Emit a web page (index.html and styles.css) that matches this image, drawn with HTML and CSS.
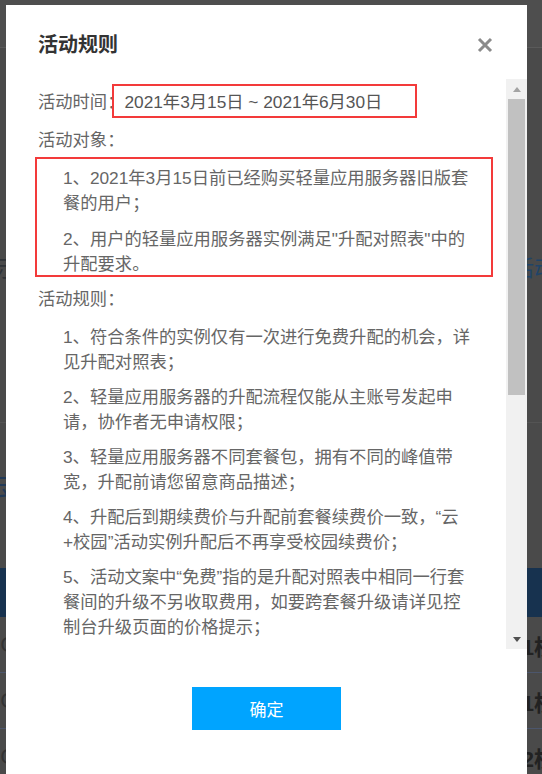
FILE: index.html
```html
<!doctype html>
<html>
<head>
  <meta charset="UTF-8">
  <title>活动规则</title>
  <link rel="stylesheet" href="styles.css">
</head>
<body>
  <div class="page">
    <div class="page-head"></div>
    <div class="page-banner"><span>展示</span><span class="blue">活动</span></div>
    <div class="page-section"><span class="blue">云</span></div>
    <div class="page-tabs"></div>
    <div class="page-row"><span>6G</span><span>1核</span></div>
    <div class="page-row"><span>6G</span><span>1核</span></div>
    <div class="page-row"><span>8G</span><span>2核</span></div>
  </div>

  <div class="dialog">
    <div class="dialog-head">
      <h2>活动规则</h2>
      <svg class="close" width="16" height="16" viewBox="0 0 16 16">
        <path d="M2 2 L14 14 M14 2 L2 14" stroke="#8a8a8a" stroke-width="3" fill="none"/>
      </svg>
    </div>
    <div class="dialog-main">
      <div class="dialog-body">
        <p class="label">活动时间：<span class="date marked">2021年3月15日 ~ 2021年6月30日</span></p>
        <p class="label">活动对象：</p>
        <ol class="items marked-list">
          <li>1、2021年3月15日前已经购买轻量应用服务器旧版套餐的用户；</li>
          <li>2、用户的轻量应用服务器实例满足"升配对照表"中的升配要求。</li>
        </ol>
        <p class="label">活动规则：</p>
        <ol class="items">
          <li>1、符合条件的实例仅有一次进行免费升配的机会，详见升配对照表；</li>
          <li>2、轻量应用服务器的升配流程仅能从主账号发起申请，协作者无申请权限；</li>
          <li>3、轻量应用服务器不同套餐包，拥有不同的峰值带宽，升配前请您留意商品描述；</li>
          <li>4、升配后到期续费价与升配前套餐续费价一致，“云+校园”活动实例升配后不再享受校园续费价；</li>
          <li>5、活动文案中“免费”指的是升配对照表中相同一行套餐间的升级不另收取费用，如要跨套餐升级请详见控制台升级页面的价格提示；</li>
        </ol>
      </div>
      <div class="scrollbar">
        <div class="sb-btn"><i class="arrow-up"></i></div>
        <div class="sb-thumb"></div>
        <div class="sb-track"></div>
        <div class="sb-btn"><i class="arrow-down"></i></div>
      </div>
    </div>
    <div class="dialog-foot">
      <button>确定</button>
    </div>
  </div>
</body>
</html>
```

FILE: styles.css
```css
* { box-sizing: border-box }
html, body {
  margin: 0;
  height: 100%;
}
body {
  font-family: "Liberation Sans", "Noto Sans CJK SC", sans-serif;
  background: #4a4a4a;
  overflow: hidden;
  position: relative;
}

/* dimmed page behind the dialog */
.page-head {
  height: 48px;
  background: #4e4e4e;
  border-bottom: 1px solid #5a5a5a;
}
.page-banner {
  height: 374px;
  display: flex;
  justify-content: space-between;
  padding-top: 208px;
  margin: 0 -14px 0 -26px;
  font-size: 22px;
  line-height: 26px;
  color: #2f3338;
}
.blue { color: #1f4468 }
.page-section {
  height: 146px;
  border-top: 1px solid #545454;
  padding-top: 50px;
  margin-left: -14px;
  font-size: 26px;
  line-height: 30px;
}
.page-section .blue { color: #223a58 }
.page-tabs {
  height: 49px;
  background: #17324f;
}
.page-row {
  height: 56px;
  display: flex;
  justify-content: space-between;
  align-items: center;
  margin: 0 -14px 0 -12px;
  border-bottom: 1px solid #4c566c;
  font-size: 22px;
  font-weight: bold;
  color: #222;
}
.page-row span:first-child { color: #333; font-weight: normal }

/* dialog */
.dialog {
  position: absolute;
  left: 6px;
  top: 5px;
  width: 521px;
  height: 800px;
  background: #fff;
}
.dialog-head {
  display: flex;
  justify-content: space-between;
  align-items: center;
  padding: 25px 34px 19px 32px;
}
.dialog-head h2 {
  margin: 0;
  font-size: 20px;
  line-height: 30px;
  font-weight: bold;
  color: #333;
}
.dialog-main {
  display: flex;
  height: 570px;
}
.dialog-body {
  flex: 1;
  overflow: hidden;
  padding: 11px 30px 0 32px;
  font-size: 17.3px;
  line-height: 25px;
  color: #666;
}
.date { color: #555 }
.label { margin: 0 0 13px }
.items {
  list-style: none;
  margin: 0 0 13px;
  padding: 0 0 0 25px;
}
.items li { margin-bottom: 10px }
.items li:last-child { margin-bottom: 0 }

/* red annotation frames */
.marked { position: relative }
.marked::after {
  content: '';
  position: absolute;
  top: -8px;
  left: -12px;
  width: 301px;
  bottom: -6px;
  border: 2px solid #f33a3a;
}
.marked-list {
  position: relative;
  margin-bottom: 10px;
}
.marked-list li { margin-bottom: 11px }
.marked-list::before {
  content: '';
  position: absolute;
  top: -9px;
  left: -3px;
  right: -17px;
  bottom: 0;
  border: 2px solid #f33a3a;
}

/* scrollbar of the rules pane */
.scrollbar {
  width: 21px;
  background: #f1f1f1;
  display: flex;
  flex-direction: column;
  align-items: center;
}
.sb-btn {
  height: 20px;
  width: 100%;
  display: flex;
  align-items: center;
  justify-content: center;
}
.arrow-up {
  border: 4px solid transparent;
  border-top: 0;
  border-bottom: 5px solid #a3a3a3;
  width: 0;
  height: 0;
}
.arrow-down {
  border: 4px solid transparent;
  border-bottom: 0;
  border-top: 5px solid #505050;
  width: 0;
  height: 0;
}
.sb-thumb {
  width: 17px;
  height: 296px;
  background: #c1c1c1;
}
.sb-track { flex: 1 }

.dialog-foot {
  display: flex;
  justify-content: center;
  padding-top: 38px;
}
.dialog-foot button {
  width: 149px;
  height: 43px;
  border: 0;
  background: #00a4ff;
  color: #fff;
  font-family: inherit;
  font-size: 17px;
}
```
